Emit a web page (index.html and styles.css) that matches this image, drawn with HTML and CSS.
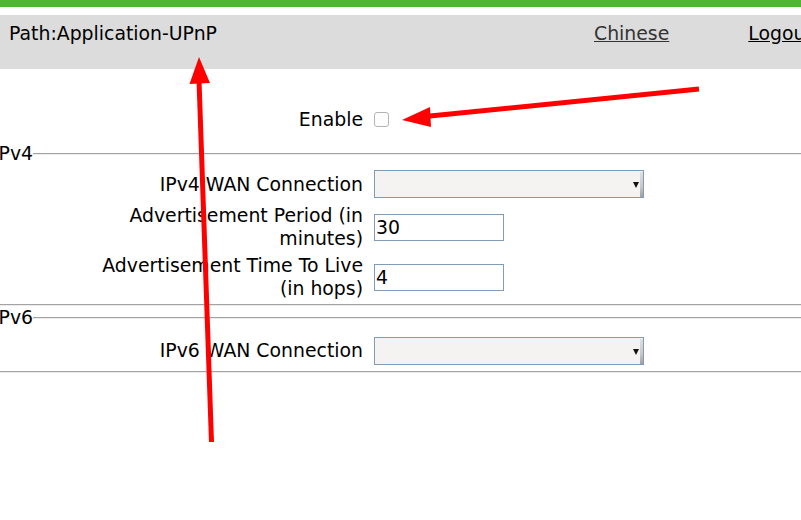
FILE: index.html
```html
<!DOCTYPE html>
<html>
<head>
<meta charset="utf-8">
<link rel="stylesheet" href="styles.css">
</head>
<body>
<div class="topbar"></div>
<div class="header">
  <span class="path">Path:Application-UPnP</span>
  <a class="lang" href="#">Chinese</a>
  <a class="logout" href="#">Logout</a>
</div>
<form class="form">
  <div class="row row-enable">
    <label class="lbl">Enable</label>
    <span class="ctl"><input type="checkbox" class="chk"></span>
  </div>
  <fieldset class="fs">
    <legend class="lg">IPv4</legend>
    <div class="row row-first">
      <label class="lbl">IPv4 WAN Connection</label>
      <span class="ctl"><span class="selbox"><select class="sel"></select></span></span>
    </div>
    <div class="row row-mid">
      <label class="lbl">Advertisement Period (in<br>minutes)</label>
      <span class="ctl"><input type="text" class="txt" value="30"></span>
    </div>
    <div class="row row-mid">
      <label class="lbl">Advertisement Time To Live<br>(in hops)</label>
      <span class="ctl"><input type="text" class="txt" value="4"></span>
    </div>
  </fieldset>
  <fieldset class="fs fs-last">
    <legend class="lg">IPv6</legend>
    <div class="row">
      <label class="lbl">IPv6 WAN Connection</label>
      <span class="ctl"><span class="selbox"><select class="sel"></select></span></span>
    </div>
  </fieldset>
</form>
<svg class="annot" width="801" height="520" viewBox="0 0 801 520">
  <line x1="211.5" y1="442" x2="199" y2="80" stroke="#ff0000" stroke-width="5"/>
  <polygon points="199,57 189.5,84 210,83" fill="#ff0000"/>
  <line x1="699" y1="89" x2="425" y2="116.5" stroke="#ff0000" stroke-width="5"/>
  <polygon points="402,120 430,107 431,127" fill="#ff0000"/>
</svg>
</body>
</html>
```
FILE: styles.css
```css
html, body {
  margin: 0;
  padding: 0;
}
body {
  width: 801px;
  height: 520px;
  overflow: hidden;
  position: relative;
  background: #fff;
  font-family: "DejaVu Sans", sans-serif;
  font-size: 18.85px;
  line-height: 23px;
  color: #000;
}
.topbar {
  height: 7px;
  background: #4cb830;
  margin-bottom: 8px;
}
.header {
  height: 54px;
  box-sizing: border-box;
  padding: 7px 0 0 9px;
  background: #dcdcdc;
  display: flex;
  white-space: nowrap;
  overflow: hidden;
}
.path {
  width: 585px;
  flex: none;
}
.lang {
  color: #333;
  text-decoration: underline;
  flex: none;
}
.logout {
  color: #000;
  text-decoration: underline;
  margin-left: 79px;
  flex: none;
}
.form {
  margin: 39px -30px 0 -7px;
  padding: 0;
}
.row {
  display: grid;
  grid-template-columns: 370px 1fr;
  column-gap: 11px;
  align-items: center;
}
.lbl {
  text-align: right;
}
.ctl {
  display: flex;
  align-items: center;
}
.row-enable {
  margin-bottom: 10.5px;
}
.row-first {
  margin-bottom: 6px;
}
.row-mid + .row-mid {
  margin-top: 4px;
}
.chk {
  appearance: none;
  -webkit-appearance: none;
  margin: 0;
  width: 15px;
  height: 15px;
  box-sizing: border-box;
  border: 1px solid #b4b4b4;
  border-radius: 3px;
  background: #fdfdfd;
}
.fs {
  margin: 0;
  padding: 5.5px 0 4px 0;
  border: none;
  border-top: 1px solid #a3a3a3;
  border-bottom: 1px solid #a3a3a3;
  box-shadow: inset 0 1px 0 #ececec, 0 1px 0 #ececec;
}
.fs-last {
  padding: 8px 0 6px 0;
  margin-top: 0.5px;
}
.lg {
  padding: 0;
  margin: 0;
}
.selbox {
  position: relative;
  display: block;
  width: 270px;
  height: 28px;
}
.sel {
  appearance: none;
  -webkit-appearance: none;
  display: block;
  width: 270px;
  height: 28px;
  margin: 0;
  box-sizing: border-box;
  border: 1px solid #7f9db9;
  border-radius: 0;
  background: #f4f3f2;
  font: inherit;
}
.selbox::before {
  content: "";
  position: absolute;
  right: 1px;
  top: 2px;
  width: 3px;
  bottom: 1px;
  background: linear-gradient(#e0e0e0 0%, #c8c8c8 60%, #a0a0a0 100%);
}
.selbox::after {
  content: "";
  position: absolute;
  right: 5px;
  top: 12px;
  border-left: 3.5px solid transparent;
  border-right: 3.5px solid transparent;
  border-top: 6px solid #111;
}
.txt {
  display: block;
  width: 130px;
  height: 27px;
  margin: 0;
  box-sizing: border-box;
  border: 1px solid #7f9db9;
  padding: 0 1px;
  font: inherit;
  color: #000;
  background: #fff;
}
.annot {
  position: absolute;
  left: 0;
  top: 0;
  pointer-events: none;
}
```
